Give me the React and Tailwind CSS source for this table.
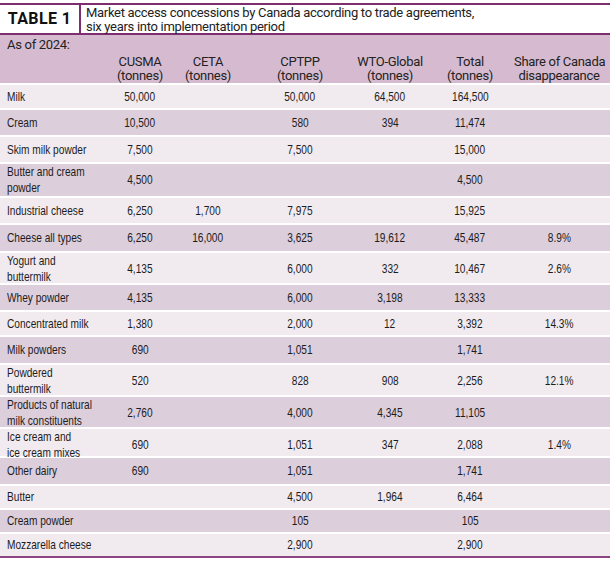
import React from 'react';

const rows = [
    { label: ['Milk'], h: 'h-[25px]', v: ['50,000', '', '50,000', '64,500', '164,500', ''] },
    { label: ['Cream'], h: 'h-[27px]', v: ['10,500', '', '580', '394', '11,474', ''] },
    { label: ['Skim milk powder'], h: 'h-[27px]', v: ['7,500', '', '7,500', '', '15,000', ''] },
    { label: ['Butter and cream', 'powder'], h: 'h-[34px]', v: ['4,500', '', '', '', '4,500', ''] },
    { label: ['Industrial cheese'], h: 'h-[27px]', v: ['6,250', '1,700', '7,975', '', '15,925', ''] },
    { label: ['Cheese all types'], h: 'h-[28px]', v: ['6,250', '16,000', '3,625', '19,612', '45,487', '8.9%'] },
    { label: ['Yogurt and', 'buttermilk'], h: 'h-[32px]', v: ['4,135', '', '6,000', '332', '10,467', '2.6%'] },
    { label: ['Whey powder'], h: 'h-[27px]', v: ['4,135', '', '6,000', '3,198', '13,333', ''] },
    { label: ['Concentrated milk'], h: 'h-[25px]', v: ['1,380', '', '2,000', '12', '3,392', '14.3%'] },
    { label: ['Milk powders'], h: 'h-[28px]', v: ['690', '', '1,051', '', '1,741', ''] },
    { label: ['Powdered', 'buttermilk'], h: 'h-[32px]', v: ['520', '', '828', '908', '2,256', '12.1%'] },
    { label: ['Products of natural', 'milk constituents'], h: 'h-[32px]', v: ['2,760', '', '4,000', '4,345', '11,105', ''] },
    { label: ['Ice cream and', 'ice cream mixes'], h: 'h-[29px]', v: ['690', '', '1,051', '347', '2,088', '1.4%'] },
    { label: ['Other dairy'], h: 'h-[28px]', v: ['690', '', '1,051', '', '1,741', ''] },
    { label: ['Butter'], h: 'h-[24px]', v: ['', '', '4,500', '1,964', '6,464', ''] },
    { label: ['Cream powder'], h: 'h-[24px]', v: ['', '', '105', '', '105', ''] },
    { label: ['Mozzarella cheese'], h: 'h-[24px]', v: ['', '', '2,900', '', '2,900', ''] },
];

const heads = [
    ['CUSMA', '(tonnes)'],
    ['CETA', '(tonnes)'],
    ['CPTPP', '(tonnes)'],
    ['WTO-Global', '(tonnes)'],
    ['Total', '(tonnes)'],
    ['Share of Canada', 'disappearance'],
];

const cols = 'grid grid-cols-[110px_60px_76px_108px_72px_88px_90px]';

const App = () => {
    return (
        <div className="w-[610px] h-[562px] bg-white pt-[3px] font-['Roboto',sans-serif] text-[#1c1c1c]">
            {/* Title */}
            <div className="flex h-[32px] border-y-2 border-[#7e2e6e]">
                <div className="w-[81px] border-r-2 border-[#7e2e6e] flex items-center justify-center text-[16px] font-bold tracking-wide text-[#111]">
                    TABLE 1
                </div>
                <div className="pl-[5px] pt-[1px] text-[13px] tracking-[-0.3px] leading-[14px] text-[#222]">
                    Market access concessions by Canada according to trade agreements,
                    <br />
                    six years into implementation period
                </div>
            </div>

            {/* Header band */}
            <div className="bg-[#d6bbd0] h-[48px] text-[13px] tracking-[-0.3px] leading-[14px] text-[#222]">
                <div className="pl-[7px] pt-[3px]">As of 2024:</div>
                <div className={`${cols} mt-[3px]`}>
                    <div />
                    {heads.map(([a, b]) => (
                        <div key={a} className="text-center whitespace-nowrap">
                            {a}
                            <br />
                            {b}
                        </div>
                    ))}
                </div>
            </div>

            {/* Rows */}
            <div className="font-['Liberation_Sans',sans-serif] text-[13.5px] leading-[16px]">
                {rows.map((r, i) => (
                    <div
                        key={r.label[0]}
                        className={`${cols} ${r.h} items-center border-t-2 border-white ${i % 2 === 0 ? 'bg-[#f1ebf0]' : 'bg-[#dccedb]'}`}
                    >
                        <div className="pl-[7px] whitespace-nowrap">
                            <div className="origin-left scale-x-[0.75]">
                                {r.label.map((l) => (
                                    <div key={l}>{l}</div>
                                ))}
                            </div>
                        </div>
                        {r.v.map((x, j) => (
                            <div key={j} className="text-center whitespace-nowrap">
                                <span className="inline-block scale-x-[0.75]">{x}</span>
                            </div>
                        ))}
                    </div>
                ))}
            </div>
            <div className="h-[2px] bg-[#8c4483]" />
        </div>
    );
};

export default App;
